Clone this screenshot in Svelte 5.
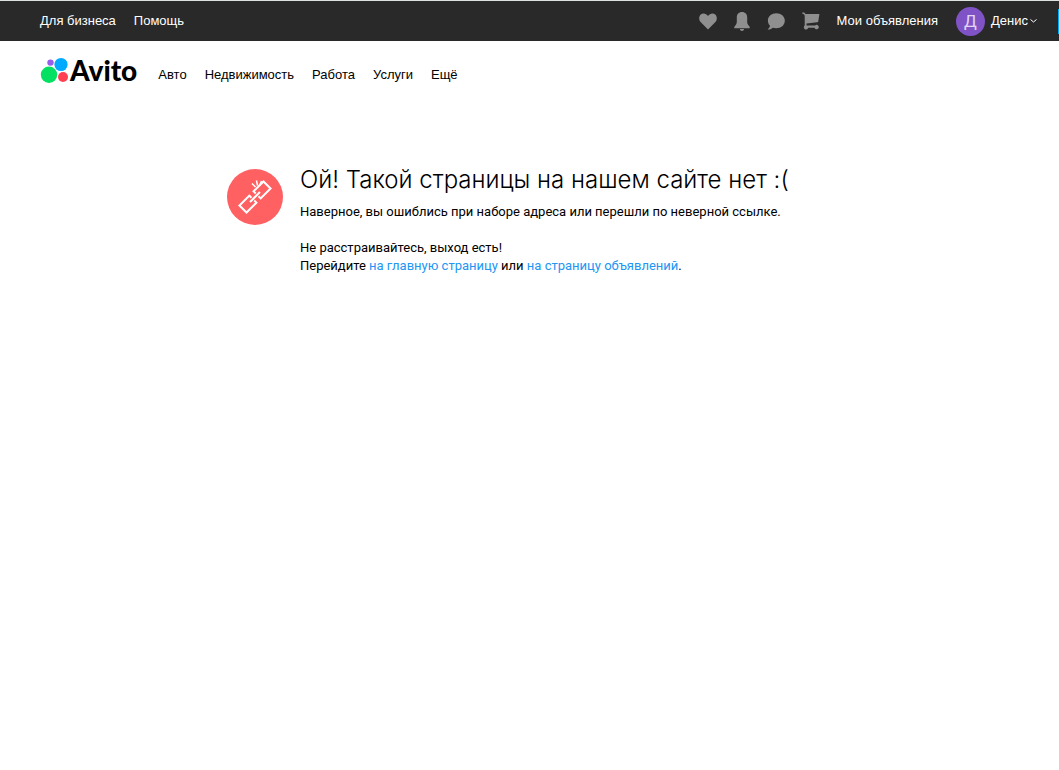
<script>
const business = ['Для бизнеса', 'Помощь']
const categories = ['Авто', 'Недвижимость', 'Работа', 'Услуги', 'Ещё']
const user = 'Денис'
</script>

<header class="topbar">
    <nav class="links">
        {#each business as item}
            <a href="/">{item}</a>
        {/each}
    </nav>
    <nav class="account">
        <a class="icon" href="/" aria-label="Избранное">
            <svg width="18" height="17" viewBox="0 0 18 17"><path d="M9 16.500 1.600 9C-.4 6.900-.2 3.300 1.700 1.600 3.800-.3 7.300.2 9 3c1.700-2.800 5.200-3.300 7.300-1.400C18.200 3.300 18.400 6.900 16.400 9z"/></svg>
        </a>
        <a class="icon" href="/" aria-label="Уведомления">
            <svg width="16" height="19" viewBox="0 0 16 19"><path d="M8 0C4.700 0 2.800 2.300 2.800 5.500v4.200c0 1.900-.6 2.900-1.900 4.300-.7.800-.9 1.500-.6 2.300h15.400c.3-.8.1-1.500-.6-2.300-1.300-1.400-1.900-2.400-1.900-4.300V5.500C13.200 2.300 11.300 0 8 0zM5.900 17c.2 1.200 1 2 2.100 2s1.900-.8 2.100-2z"/></svg>
        </a>
        <a class="icon" href="/" aria-label="Сообщения">
            <svg width="18" height="17" viewBox="0 0 18 17"><path d="M9.300.3C4.500.3.900 3.400.9 7.600c0 2.200.8 3.900 2.100 5.200-.2 1.300-1 2.500-2.400 3.600 1.900.3 3.800-.2 5.200-1.700 1 .3 2.200.5 3.500.5 4.800 0 8.500-3.100 8.500-7.500S14.100.3 9.300.3z"/></svg>
        </a>
        <a class="icon" href="/" aria-label="Корзина">
            <svg width="18" height="18" viewBox="0 0 18 18"><path d="M.3.500h1.200c1 0 1.700.6 1.900 1.500h14l-1.100 7.300c-.1.700-.6 1-1.200 1L4.500 11.500v2.100h8.600a2.100 2.100 0 1 1-.5 2.200H6.200a2.200 2.200 0 1 1-3.500-2.200V4.200C2.700 2.800 2 2 .3 1.800z"/></svg>
        </a>
        <a class="ads" href="/">Мои объявления</a>
        <a class="user" href="/">
            <span class="avatar">{user[0]}</span>
            <span>{user}</span>
            <svg class="arrow" width="7" height="4" viewBox="0 0 7 4"><path d="M.5.500 3.500 3l3-2.500"/></svg>
        </a>
    </nav>
    <span class="edge"></span>
</header>

<div class="menu">
    <a class="logo" href="/">
        <svg width="29" height="26" viewBox="0 0 29 26">
            <circle cx="10.500" cy="5.600" r="3.200" fill="#965eeb"/>
            <circle cx="21" cy="7.500" r="6.600" fill="#00aaff"/>
            <circle cx="9" cy="17.700" r="8.200" fill="#04e061"/>
            <circle cx="23" cy="20" r="5" fill="#ff4053"/>
        </svg>
        <span>Avito</span>
    </a>
    <nav class="categories">
        {#each categories as item}
            <a href="/">{item}</a>
        {/each}
    </nav>
</div>

<main>
    <svg class="broken" width="56" height="56" viewBox="0 0 56 56">
        <circle cx="28" cy="28" r="28" fill="#ff6163"/>
        <g transform="rotate(-45 28 28)" fill="none" stroke="#fff" stroke-width="2">
            <path d="M25 26v-3H11v10h14V30"/>
            <path d="M31 26v-3h14v10H31V30"/>
            <path d="M21 28h14"/>
        </g>
        <path d="M25 14.500l3.500 3.500M29.500 11.500l1 5M34.500 12l-2 4.500" stroke="#fff" stroke-width="1.500"/>
    </svg>
    <div class="message">
        <h1>Ой! Такой страницы на нашем сайте нет :(</h1>
        <p>Наверное, вы ошиблись при наборе адреса или перешли по неверной ссылке.</p>
        <p>
            Не расстраивайтесь, выход есть!<br>
            Перейдите <a href="/">на главную страницу</a> или <a href="/">на страницу объявлений</a>.
        </p>
    </div>
</main>

<style>
:global(body){
    margin: 0;
    background: #fff;
    color: #000;
    font: 13px/18px "Liberation Sans", sans-serif;
}
a{
    color: inherit;
    text-decoration: none;
}
.topbar{
    display: flex;
    align-items: center;
    height: 40px;
    padding-left: 40px;
    border-top: 1px solid #dde3e0;
    background: #292929;
    color: #fff;
}
.links{
    display: flex;
    gap: 18px;
}
.account{
    display: flex;
    align-items: center;
    margin-left: auto;
}
.icon{
    display: flex;
    margin-right: 17px;
}
.icon svg{
    fill: #8f8f8f;
}
.ads{
    margin-right: 18px;
}
.user{
    display: flex;
    align-items: center;
    margin-right: 21px;
}
.avatar{
    width: 29px;
    margin-right: 6px;
    border-radius: 50%;
    background: #7f53c5;
    color: #e0d5f2;
    font-family: Roboto, sans-serif;
    font-size: 17px;
    line-height: 29px;
    text-align: center;
}
.arrow{
    margin-left: 2px;
    fill: none;
    stroke: #fff;
}
.edge{
    width: 1px;
    height: 25px;
    background: #00aaff;
}
.menu{
    display: flex;
    align-items: center;
    gap: 21px;
    padding: 16px 40px;
}
.logo{
    display: flex;
    align-items: center;
    gap: 1px;
    font: 900 28px/26px Lato, sans-serif;
}
.categories{
    display: flex;
    gap: 18px;
    margin-bottom: -2px;
    padding-top: 8px;
}
main{
    display: flex;
    gap: 17px;
    padding: 64px 40px 40px 227px;
}
.broken{
    flex: none;
    margin-top: 6px;
}
.message{
    padding-top: 1px;
    font-family: Roboto, sans-serif;
}
h1{
    margin: 0 0 7px;
    font-family: Inter, sans-serif;
    font-size: 24px;
    font-weight: 300;
    line-height: 32px;
}
p{
    margin: 0 0 18px;
}
p a{
    color: #2196f3;
}
</style>
